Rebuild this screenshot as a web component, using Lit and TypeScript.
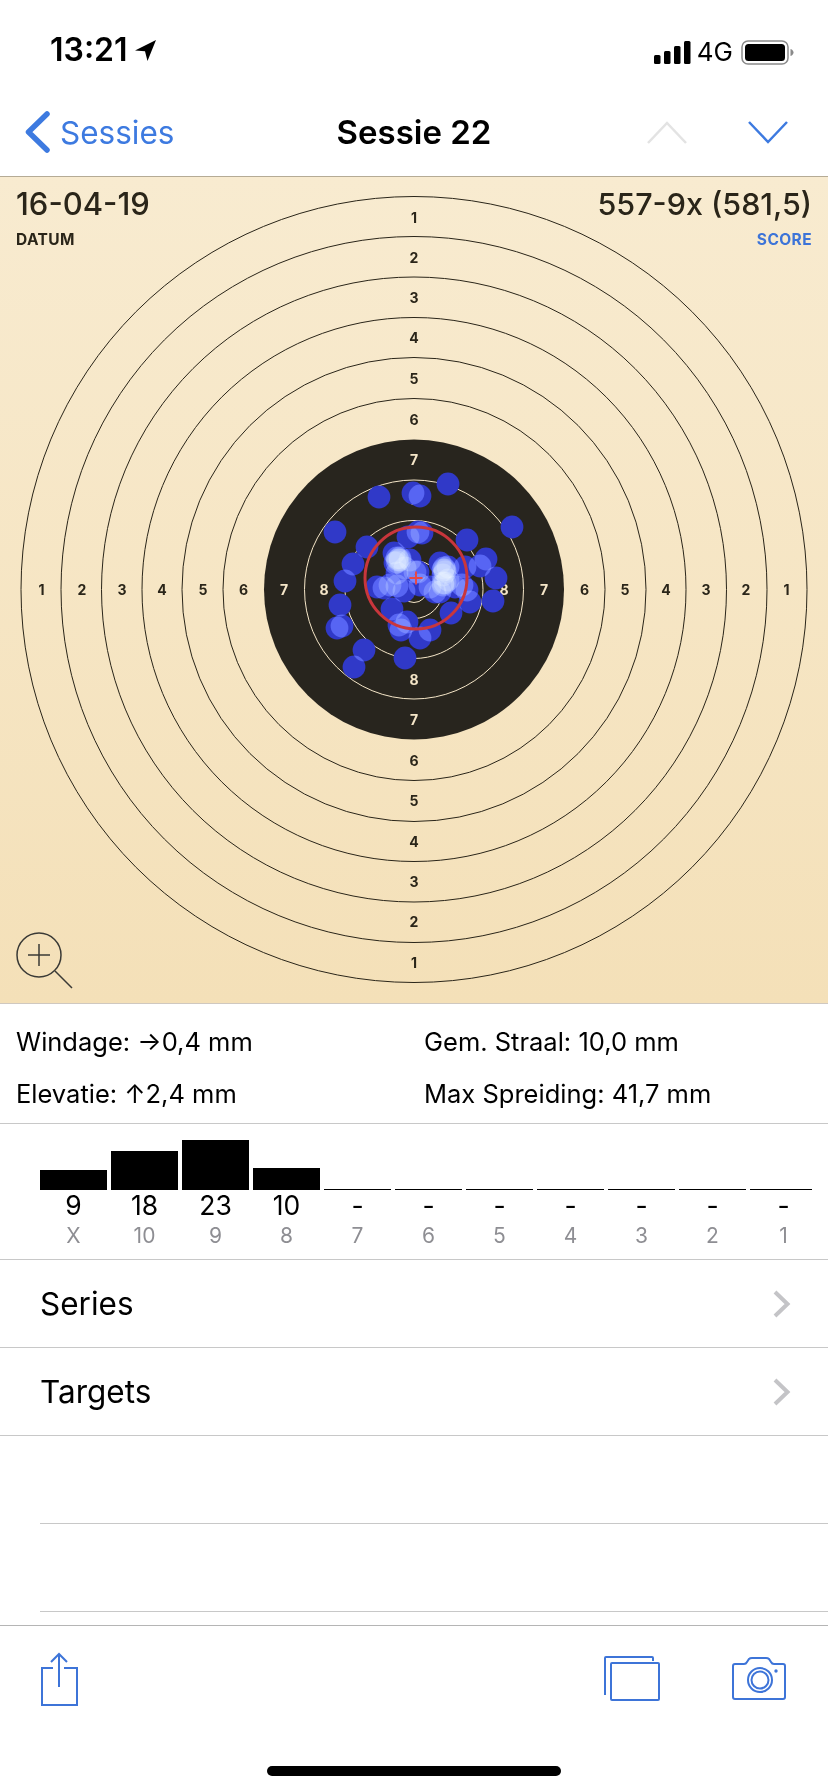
import { LitElement, css, html, svg } from "lit";
import { customElement } from "lit/decorators.js";

// shot positions, centre of each dot in page coordinates
const SHOTS: [number, number][] = [
  [448, 484], [379, 497], [413, 493], [420, 496], [512, 527], [335, 532], [408, 537], [418, 532],
  [422, 533], [467, 540], [367, 547], [394, 553], [353, 564], [486, 559], [480, 566], [345, 581],
  [496, 578], [340, 605], [493, 601], [470, 602], [451, 613], [392, 609], [337, 628], [342, 626],
  [364, 650], [354, 667], [405, 658], [420, 638], [430, 630], [407, 622], [399, 625], [401, 630],
  [377, 587], [384, 588], [390, 585], [397, 586], [404, 591], [397, 562], [400, 560], [395, 563],
  [410, 560], [415, 572], [418, 572], [440, 563], [445, 570], [448, 567], [443, 575], [430, 587],
  [435, 592], [443, 583], [448, 580], [440, 592], [455, 587], [465, 567], [462, 585], [467, 590],
  [397, 573], [405, 568], [420, 585], [397, 558], [400, 558], [398, 560], [443, 570], [445, 572],
  [444, 568], [443, 585], [445, 583],
];

const RING_RADII = [393, 353, 312.5, 272, 232, 191];
const INNER_RADII = [109.5, 69, 29, 13];
const LABELS = [
  { n: 1, r: 372.5 }, { n: 2, r: 332 }, { n: 3, r: 292 }, { n: 4, r: 252 },
  { n: 5, r: 211 }, { n: 6, r: 170.5 }, { n: 7, r: 130 }, { n: 8, r: 90 },
];

const BARS = [
  { value: "9", label: "X", h: 20 }, { value: "18", label: "10", h: 39 },
  { value: "23", label: "9", h: 50 }, { value: "10", label: "8", h: 22 },
  { value: "-", label: "7", h: 1 }, { value: "-", label: "6", h: 1 },
  { value: "-", label: "5", h: 1 }, { value: "-", label: "4", h: 1 },
  { value: "-", label: "3", h: 1 }, { value: "-", label: "2", h: 1 },
  { value: "-", label: "1", h: 1 },
];

@customElement("shot-target")
export class ShotTarget extends LitElement {
  static styles = css`
    :host {
      display: block;
      position: relative;
      height: 826px;
      background: linear-gradient(#f8ebd0, #f4e0b8);
      overflow: hidden;
    }

    svg.face {
      display: block;
    }

    .num {
      font: 700 14px "Inter", "Liberation Sans", sans-serif;
      text-anchor: middle;
      dominant-baseline: central;
    }

    .shots {
      isolation: isolate;
    }

    .shot {
      mix-blend-mode: screen;
    }

    .stat {
      position: absolute;
      top: 9px;
      color: #2a2519;
    }

    .stat.date {
      left: 16px;
    }

    .stat.score {
      right: 16px;
      text-align: right;
    }

    .big {
      font: 500 31px/36px "Inter", "Liberation Sans", sans-serif;
    }

    .score .big {
      font-size: 30.5px;
    }

    .small {
      font: 700 15.5px/18px "Inter", "Liberation Sans", sans-serif;
      letter-spacing: 0.4px;
      margin-top: 9px;
    }

    .score .small {
      color: #3d74d8;
    }

    .zoom {
      position: absolute;
      left: 15px;
      top: 754px;
    }
  `;

  render() {
    const cx = 414;
    const cy = 412.5;
    const offY = 177;
    const labels = LABELS.flatMap(({ n, r }) =>
      [[0, -r], [0, r], [-r, 0], [r, 0]].map(
        ([dx, dy]) => svg`<text class="num" x=${cx + dx} y=${cy + dy}
          fill=${n >= 7 ? "#f5e6c8" : "#2a2519"}>${n}</text>`
      )
    );
    return html`
      <svg class="face" width="828" height="826" viewBox="0 0 828 826">
        ${RING_RADII.map((r) => svg`<circle cx=${cx} cy=${cy} r=${r} fill="none" stroke="#2a2519" stroke-width="1" />`)}
        <circle cx=${cx} cy=${cy} r="150" fill="#28251e" />
        ${INNER_RADII.map((r) => svg`<circle cx=${cx} cy=${cy} r=${r} fill="none" stroke="#f5e6c8" stroke-width="1" />`)}
        ${labels}
        <g class="shots">
          ${SHOTS.map(([x, y]) => svg`<circle class="shot" cx=${x} cy=${y - offY} r="11.4" fill="#3039c8" />`)}
        </g>
        <circle cx="416" cy=${578 - offY} r="51" fill="none" stroke="#c9363c" stroke-width="3" />
        <path d="M409.500 ${578 - offY}h13M416 ${571.5 - offY}v13" stroke="#e5484a" stroke-width="2" fill="none" />
      </svg>
      <div class="stat date">
        <div class="big">16-04-19</div>
        <div class="small">DATUM</div>
      </div>
      <div class="stat score">
        <div class="big">557-9x (581,5)</div>
        <div class="small">SCORE</div>
      </div>
      <svg class="zoom" width="60" height="60" viewBox="0 0 60 60" fill="none" stroke="#3a3a36" stroke-width="1.5">
        <circle cx="24" cy="24" r="22" />
        <path d="M24 13v22M13 24h22M40 40l17 17" />
      </svg>
    `;
  }
}

@customElement("app-root")
export class AppRoot extends LitElement {
  static styles = css`
    :host {
      display: block;
      width: 828px;
      height: 1792px;
      background: #fff;
      font-family: "Inter", "Liberation Sans", sans-serif;
      color: #000;
      overflow: hidden;
    }

    .status {
      height: 88px;
      display: flex;
      align-items: flex-end;
      justify-content: space-between;
      padding: 0 33px 21px 50px;
      box-sizing: border-box;
    }

    .time {
      display: flex;
      align-items: center;
      gap: 7px;
      font-size: 32px;
      font-weight: 600;
      line-height: 34px;
    }

    .indicators {
      display: flex;
      align-items: center;
      gap: 8px;
      font-size: 26px;
      line-height: 30px;
    }

    .signal {
      margin-right: -2px;
    }

    .nav {
      height: 89px;
      display: grid;
      grid-template-columns: 1fr auto 1fr;
      align-items: center;
      border-bottom: 1px solid #b5ab95;
      box-sizing: border-box;
    }

    .back {
      display: flex;
      align-items: center;
      gap: 10px;
      padding-left: 25px;
      color: #3d7ae0;
      font-size: 31.5px;
    }

    .title {
      font-size: 33px;
      font-weight: 600;
    }

    .arrows {
      display: flex;
      justify-content: flex-end;
      gap: 61px;
      padding-right: 40px;
    }

    .stats {
      display: grid;
      grid-template-columns: 408px 1fr;
      align-content: start;
      row-gap: 16px;
      padding: 20px 0 0 16px;
      height: 121px;
      box-sizing: border-box;
      border-top: 1px solid #cfc8c0;
      border-bottom: 1px solid #c8c8c8;
      font-size: 25.5px;
      line-height: 36px;
    }

    .bars {
      display: grid;
      grid-template-columns: repeat(11, 67px);
      column-gap: 4px;
      height: 136px;
      padding: 16px 0 0 40px;
      box-sizing: border-box;
      border-bottom: 1px solid #c8c8c8;
    }

    .col {
      display: flex;
      flex-direction: column;
      align-items: center;
    }

    .well {
      width: 100%;
      height: 50px;
      display: flex;
      align-items: flex-end;
    }

    .bar {
      width: 100%;
      background: #000;
    }

    .col:last-child .bar {
      width: 62px;
      margin-right: 5px;
    }

    .value {
      font-size: 26.5px;
      line-height: 30px;
    }

    .label {
      font-size: 21px;
      line-height: 32px;
      color: #8e8e93;
    }

    .row {
      height: 88px;
      display: flex;
      align-items: center;
      justify-content: space-between;
      padding: 0 37px 0 40px;
      box-sizing: border-box;
      border-bottom: 1px solid #c8c8c8;
      font-size: 31.5px;
    }

    .empty {
      height: 88px;
      margin-left: 40px;
      box-sizing: border-box;
      border-bottom: 1px solid #c8c8c8;
    }

    .toolbar {
      height: 167px;
      margin-top: 13px;
      border-top: 1px solid #b5b5b5;
      box-sizing: border-box;
      display: flex;
      flex-direction: column;
    }

    .tools {
      display: flex;
      align-items: flex-start;
      height: 54px;
      padding: 26px 40px 0 40px;
    }

    .spacer {
      flex: 1;
    }

    .stack {
      margin-top: 3px;
    }

    .cam {
      margin: 5px 0 0 72px;
    }

    .home {
      width: 294px;
      height: 10px;
      border-radius: 5px;
      background: #000;
      margin: 60px auto 0;
    }
  `;

  render() {
    return html`
      <div class="status">
        <div class="time">
          <span>13:21</span>
          <svg width="21" height="21" viewBox="0 0 21 21"><path d="M21 0L0 10.500l10 .8L12.500 21z" fill="#000" /></svg>
        </div>
        <div class="indicators">
          <svg class="signal" width="37" height="23" viewBox="0 0 37 23" fill="#000">
            <rect x="0" y="14" width="6.500" height="9" rx="1.500" />
            <rect x="10" y="10" width="6.500" height="13" rx="1.500" />
            <rect x="20" y="5" width="6.500" height="18" rx="1.500" />
            <rect x="30" y="0" width="6.500" height="23" rx="1.500" />
          </svg>
          <span>4G</span>
          <svg width="54" height="25" viewBox="0 0 54 25">
            <rect x="1" y="1" width="46" height="23" rx="6" fill="none" stroke="#8a8a8a" stroke-width="1.500" />
            <rect x="4" y="4" width="40" height="17" rx="3.500" fill="#000" />
            <path d="M49.500 9c2 .6 3 2 3 3.500s-1 2.900-3 3.500z" fill="#8a8a8a" />
          </svg>
        </div>
      </div>
      <div class="nav">
        <div class="back">
          <svg width="25" height="42" viewBox="0 0 25 42" fill="none" stroke="#3d7ae0" stroke-width="5.500" stroke-linecap="round" stroke-linejoin="round"><path d="M22 3L3.500 21 22 39" /></svg>
          <span>Sessies</span>
        </div>
        <div class="title">Sessie 22</div>
        <div class="arrows">
          <svg width="40" height="23" viewBox="0 0 40 23" fill="none" stroke="#e3e3e3" stroke-width="2.500"><path d="M1 22L20 2l19 20" /></svg>
          <svg width="40" height="23" viewBox="0 0 40 23" fill="none" stroke="#3d7ae0" stroke-width="2.500"><path d="M1 1l19 20L39 1" /></svg>
        </div>
      </div>
      <shot-target></shot-target>
      <div class="stats">
        <div>Windage: →0,4 mm</div>
        <div>Gem. Straal: 10,0 mm</div>
        <div>Elevatie: ↑2,4 mm</div>
        <div>Max Spreiding: 41,7 mm</div>
      </div>
      <div class="bars">
        ${BARS.map(
          (b) => html`<div class="col">
            <div class="well"><div class="bar" style="height:${b.h}px"></div></div>
            <div class="value">${b.value}</div>
            <div class="label">${b.label}</div>
          </div>`
        )}
      </div>
      <div class="row">
        <span>Series</span>
        <svg width="18" height="28" viewBox="0 0 18 28" fill="none" stroke="#c4c4c7" stroke-width="4"><path d="M2 2l12.500 12L2 26" /></svg>
      </div>
      <div class="row">
        <span>Targets</span>
        <svg width="18" height="28" viewBox="0 0 18 28" fill="none" stroke="#c4c4c7" stroke-width="4"><path d="M2 2l12.500 12L2 26" /></svg>
      </div>
      <div class="empty"></div>
      <div class="empty"></div>
      <div class="toolbar">
        <div class="tools">
          <svg width="38" height="54" viewBox="0 0 38 54" fill="none" stroke="#3d74d8" stroke-width="2">
            <path d="M13 16H2v37h35V16H24M19 35V2M11 10l8-8 8 8" />
          </svg>
          <div class="spacer"></div>
          <svg class="stack" width="56" height="46" viewBox="0 0 56 46" fill="none" stroke="#3d74d8" stroke-width="2" stroke-linejoin="round">
            <path d="M49 6V3a1 1 0 0 0-1-1H2a1 1 0 0 0-1 1v37" />
            <rect x="7" y="8" width="48" height="37" rx="1" />
          </svg>
          <svg class="cam" width="56" height="44" viewBox="0 0 56 44" fill="none" stroke="#3d74d8" stroke-width="2">
            <path d="M3 7h9q2 0 3-2l2-3q1-1 3-1h14q2 0 3 1l2 3q1 2 3 2h9q2 0 2 2v31q0 2-2 2H3q-2 0-2-2V9q0-2 2-2z" />
            <circle cx="28" cy="23" r="12" />
            <circle cx="28" cy="23" r="8.500" />
            <circle cx="44" cy="14" r="1.700" fill="#3d74d8" stroke="none" />
          </svg>
        </div>
        <div class="home"></div>
      </div>
    `;
  }
}
